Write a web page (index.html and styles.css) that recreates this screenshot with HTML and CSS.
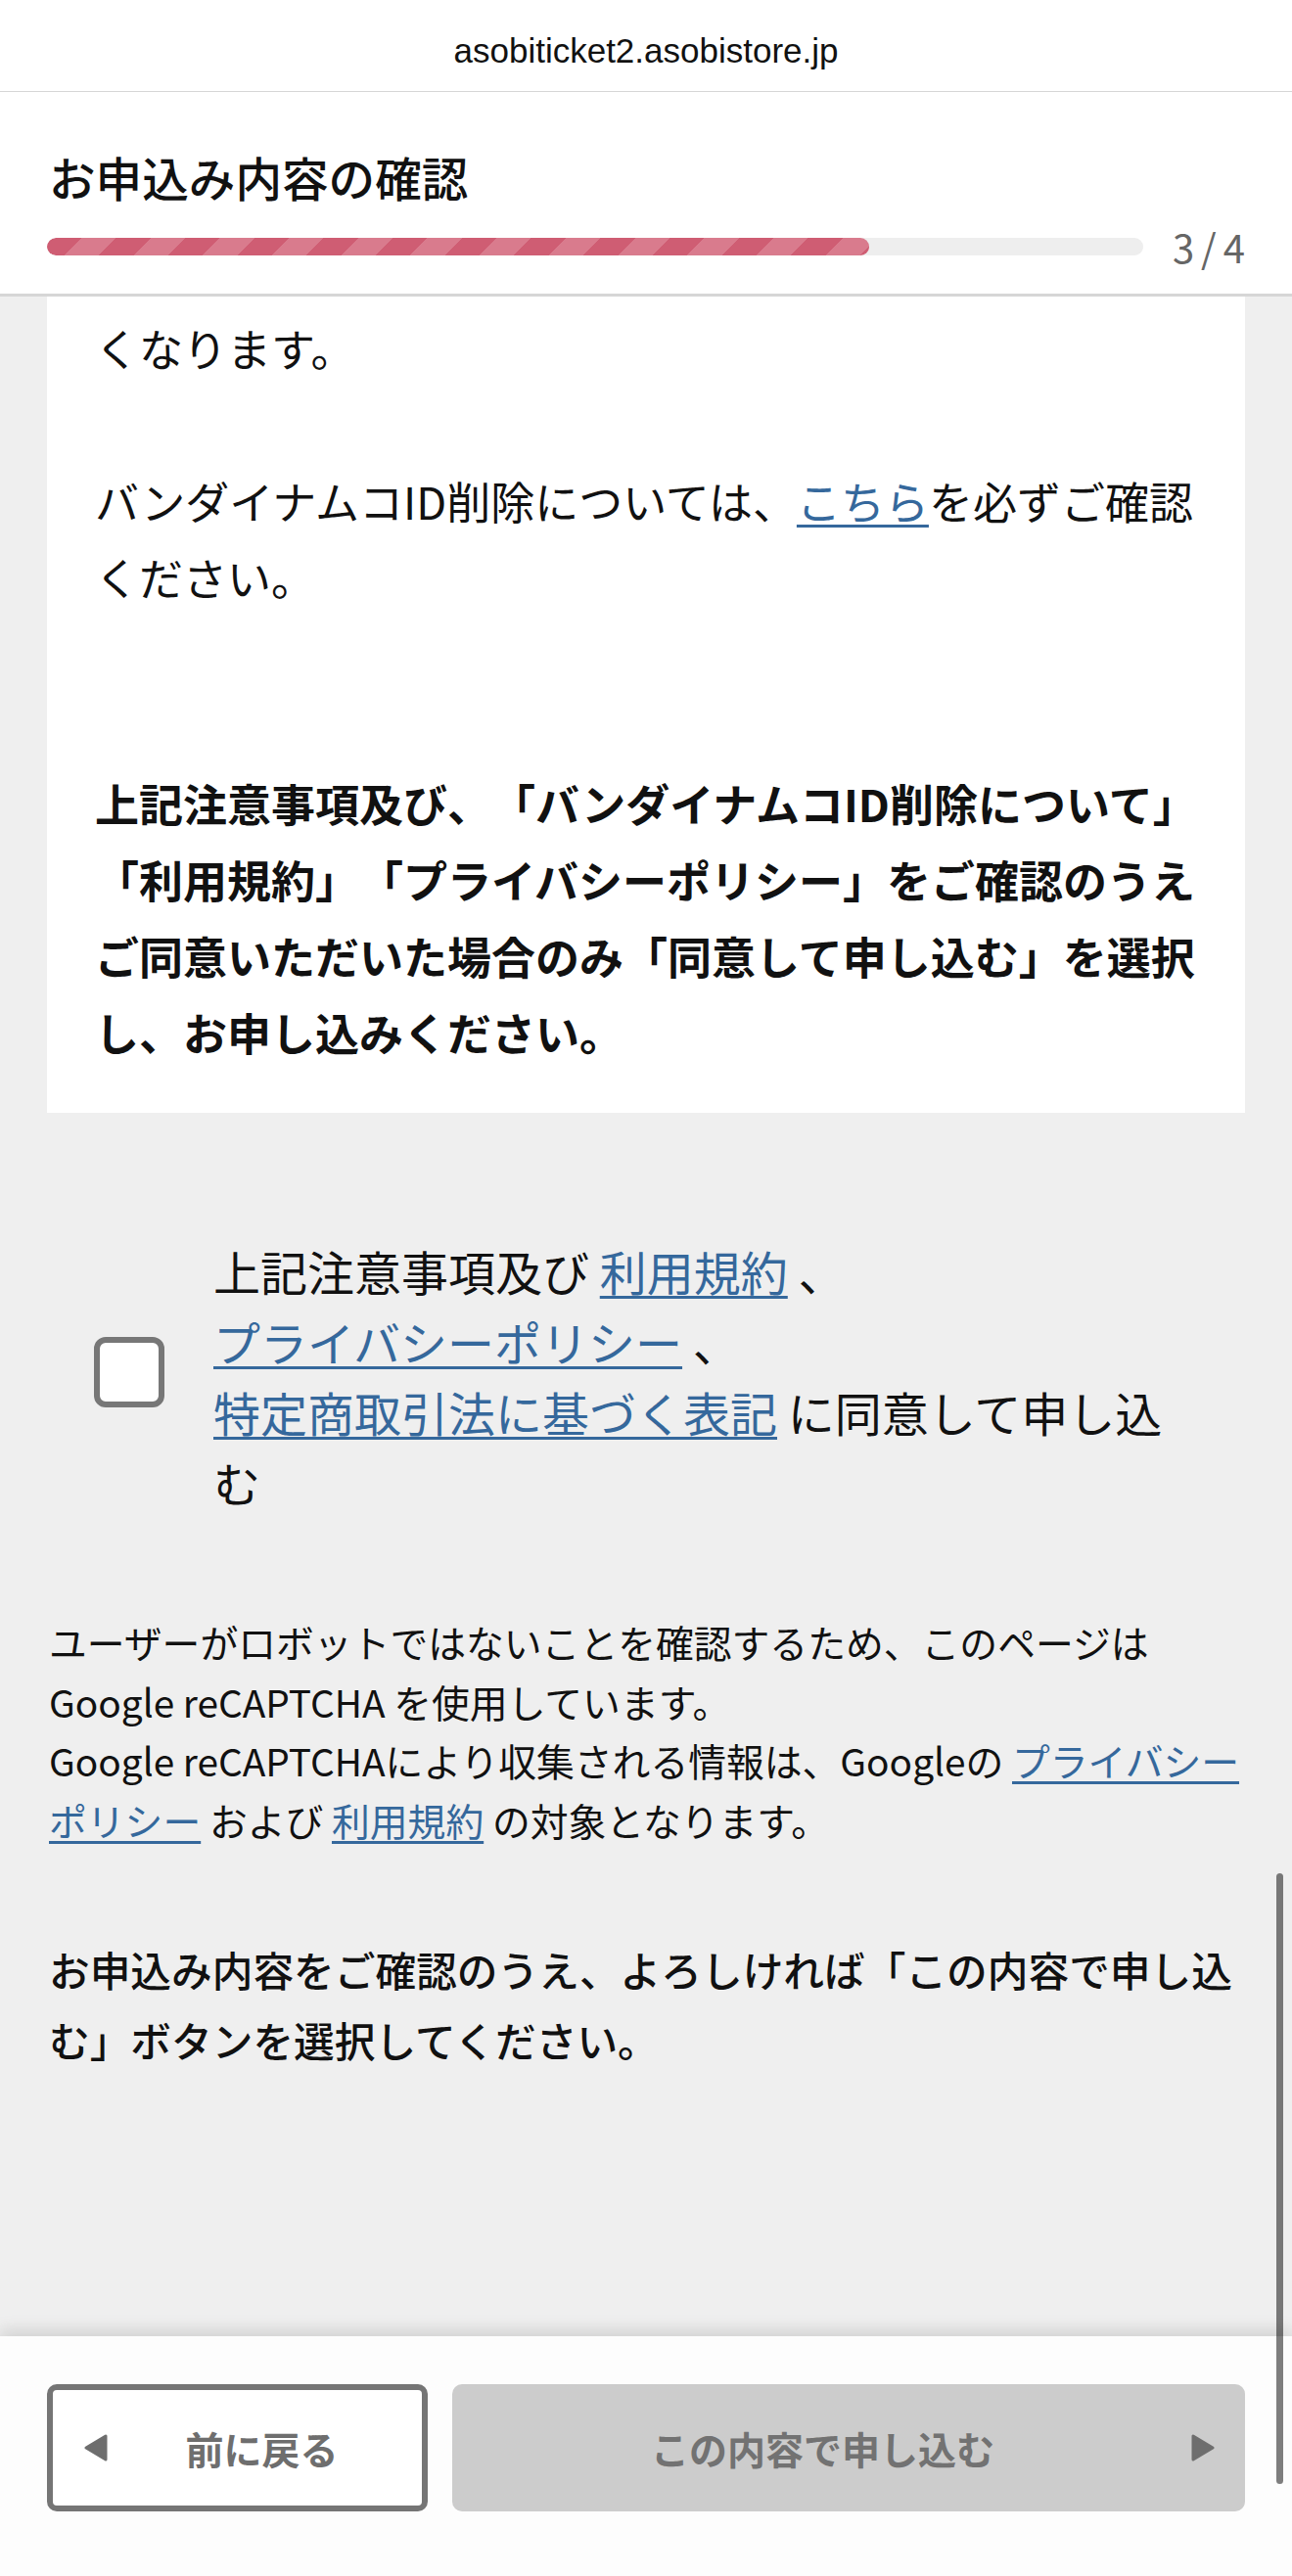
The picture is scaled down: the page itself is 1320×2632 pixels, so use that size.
FILE: index.html
```html
<!DOCTYPE html>
<html lang="ja">
<head>
<meta charset="utf-8">
<title>お申込み内容の確認</title>
<link rel="stylesheet" href="styles.css">
</head>
<body>
  <div class="urlbar">asobiticket2.asobistore.jp</div>

  <header class="page-head">
    <h1 class="page-title">お申込み内容の確認</h1>
    <div class="progress">
      <div class="track"><div class="fill" style="width:75%"></div></div>
      <span class="step">3/4</span>
    </div>
  </header>

  <main class="content">
    <section class="notice">
      <p>くなります。</p>
      <p class="para-gap">バンダイナムコID削除については、<a class="link" href="#">こちら</a>を必ずご確認<br>ください。</p>
      <p class="notice-strong">上記注意事項及び、「バンダイナムコID削除について」<br>「利用規約」「プライバシーポリシー」をご確認のうえ<br>ご同意いただいた場合のみ「同意して申し込む」を選択<br>し、お申し込みください。</p>
    </section>

    <label class="agree">
      <span class="checkbox"></span>
      <span class="agree-text">上記注意事項及び <a class="link" href="#">利用規約</a> 、<br><a class="link" href="#">プライバシーポリシー</a> 、<br><a class="link" href="#">特定商取引法に基づく表記</a> に同意して申し込<br>む</span>
    </label>

    <p class="recaptcha">ユーザーがロボットではないことを確認するため、このページは<br>Google reCAPTCHA を使用しています。<br>Google reCAPTCHAにより収集される情報は、Googleの <a class="link" href="#">プライバシー<br>ポリシー</a> および <a class="link" href="#">利用規約</a> の対象となります。</p>

    <p class="lead">お申込み内容をご確認のうえ、よろしければ「この内容で申し込<br>む」ボタンを選択してください。</p>
  </main>

  <footer class="actions">
    <button class="btn btn-back" type="button">
      <svg class="arrow" width="24" height="28" viewBox="0 0 24 28"><path d="M22 2 L22 26 L2 14 Z" fill="#6e6e6e" stroke="#6e6e6e" stroke-width="3" stroke-linejoin="round"/></svg>
      <span class="btn-label">前に戻る</span>
    </button>
    <button class="btn btn-submit" type="button" disabled>
      <span class="btn-label">この内容で申し込む</span>
      <svg class="arrow" width="24" height="28" viewBox="0 0 24 28"><path d="M2 2 L2 26 L22 14 Z" fill="#6e6e6e" stroke="#6e6e6e" stroke-width="3" stroke-linejoin="round"/></svg>
    </button>
  </footer>

  <div class="scroll-indicator"></div>
</body>
</html>
```

FILE: styles.css
```css
* { box-sizing: border-box; }

html, body {
  margin: 0;
  padding: 0;
}

body {
  position: relative;
  width: 1320px;
  height: 2632px;
  overflow: hidden;
  display: flex;
  flex-direction: column;
  background: #efefef;
  color: #111;
  font-family: "Noto Sans CJK JP", "Noto Sans", sans-serif;
  text-spacing-trim: space-all;
}

/* browser address bar */
.urlbar {
  flex: none;
  height: 94px;
  padding-top: 10px;
  display: flex;
  align-items: center;
  justify-content: center;
  background: #fff;
  border-bottom: 1px solid #d6d6d6;
  font-family: "Liberation Sans", Arial, sans-serif;
  font-size: 35px;
  color: #111;
}

/* page header */
.page-head {
  flex: none;
  background: #fff;
  padding: 51px 48px 28px;
  border-bottom: 3px solid #d6d6d6;
}

.page-title {
  margin: 0;
  padding-left: 2px;
  font-size: 47.6px;
  line-height: 72px;
  font-weight: 500;
  color: #111;
}

.progress {
  margin-top: 15px;
  height: 40px;
  display: flex;
  align-items: center;
  gap: 30px;
}

.track {
  flex: 1;
  height: 18px;
  border-radius: 9px;
  background: #eeeeee;
  overflow: hidden;
}

.fill {
  height: 100%;
  border-radius: 9px;
  background: repeating-linear-gradient(135deg,
    #cf5d73 0px, #cf5d73 25px,
    #d97b8d 25px, #d97b8d 50px);
}

.step {
  flex: none;
  font-size: 40px;
  line-height: 40px;
  color: #666;
  letter-spacing: 7px;
  margin-right: -7px;
}

/* main content */
.content {
  flex: 1;
  min-height: 0;
}

.link {
  color: #35689c;
  text-decoration: underline;
  text-decoration-thickness: 3px;
  text-underline-offset: 5px;
}

.notice {
  margin: 0 48px;
  background: #fff;
  padding: 14px 26px 43px 49px;
  font-size: 45px;
  line-height: 78px;
  color: #111;
}

.notice p {
  margin: 0;
}

.notice .para-gap {
  margin-top: 78px;
}

.notice .notice-strong {
  margin-top: 153px;
  font-weight: 700;
}

.agree {
  margin: 125px 40px 0 48px;
  padding-left: 48px;
  display: flex;
  align-items: center;
  gap: 50px;
}

.checkbox {
  flex: none;
  width: 72px;
  height: 72px;
  margin-top: -9px;
  border: 6px solid #777;
  border-radius: 12px;
  background: #fff;
}

.agree-text {
  font-size: 48px;
  line-height: 72px;
  color: #111;
}

.recaptcha {
  margin: 97px 40px 0 50px;
  font-size: 38.8px;
  line-height: 60.5px;
  color: #111;
}

.lead {
  margin: 87px 40px 0 50px;
  font-size: 41.7px;
  line-height: 72px;
  font-weight: 500;
  color: #111;
}

/* bottom action bar */
.actions {
  flex: none;
  height: 245px;
  padding: 49px 48px 0;
  display: flex;
  align-items: flex-start;
  gap: 25px;
  background: #fdfdfd;
  box-shadow: 0 -6px 16px rgba(0, 0, 0, 0.13);
}

.btn {
  appearance: none;
  height: 130px;
  display: flex;
  align-items: center;
  border-radius: 10px;
  font-family: inherit;
  font-size: 39px;
  font-weight: 700;
  color: #6e6e6e;
  cursor: pointer;
}

.btn-label {
  flex: 1;
  text-align: center;
}

.arrow {
  flex: none;
  display: block;
}

.btn-back {
  width: 389px;
  flex: none;
  padding: 0 6px 0 32px;
  border: 6px solid #757575;
  background: #fff;
}

.btn-submit {
  flex: 1;
  padding: 0 31px 0 2px;
  border: none;
  background: #cccccc;
  color: #727272;
}

/* iOS scroll indicator overlay */
.scroll-indicator {
  position: absolute;
  left: 1304px;
  top: 1914px;
  width: 7px;
  height: 624px;
  border-radius: 4px;
  background: rgba(0, 0, 0, 0.5);
}
```
